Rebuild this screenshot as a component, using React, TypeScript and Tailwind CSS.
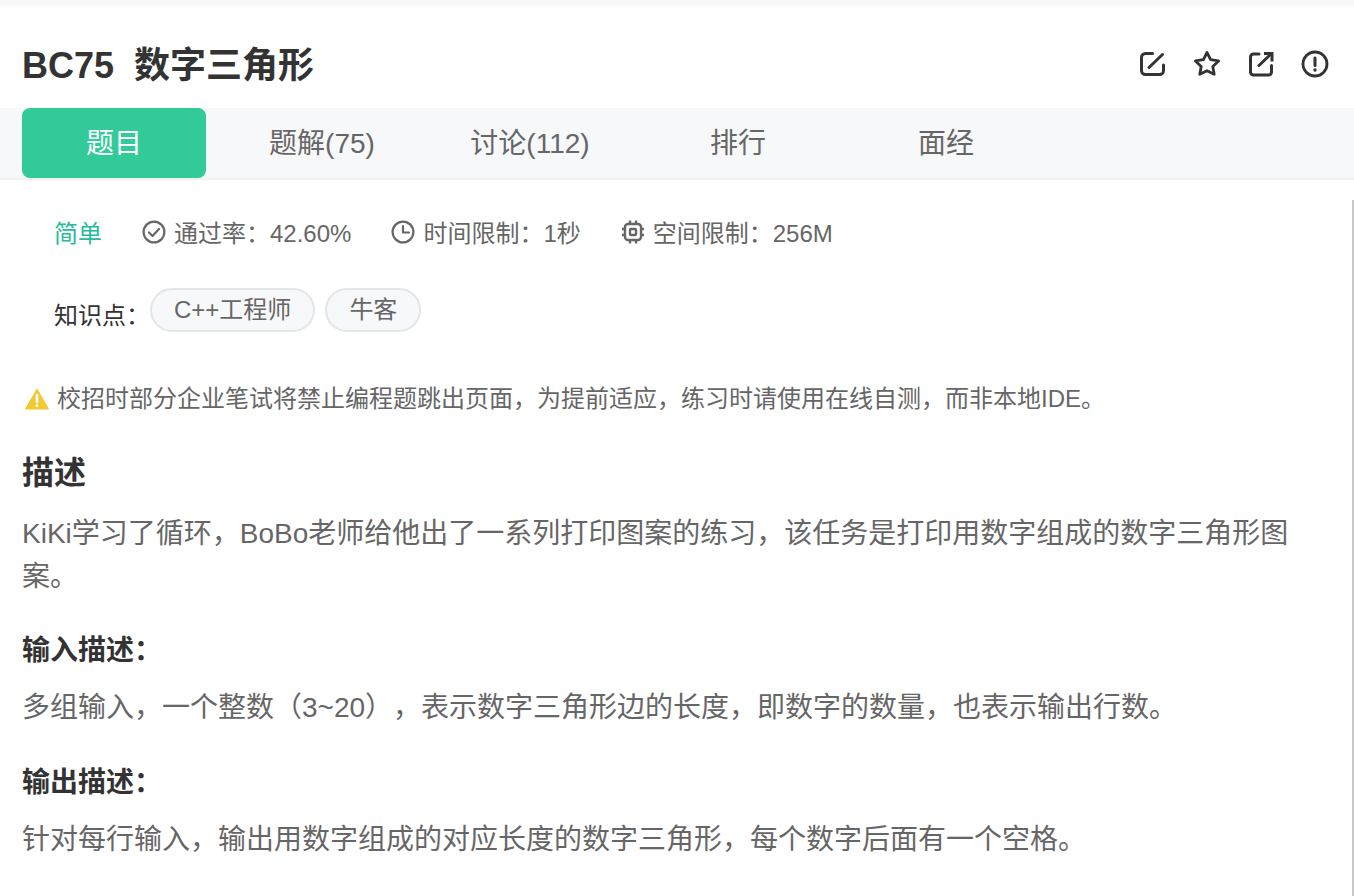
const FONT = "font-['Liberation_Sans','Noto_Sans_CJK_SC',sans-serif] [text-spacing-trim:space-all]";

const tabs = ["题目", "题解(75)", "讨论(112)", "排行", "面经"];

const IconEdit = () => (
  <svg width="28" height="28" viewBox="0 0 28 28" fill="none" stroke="#333" strokeWidth="3" strokeLinecap="round" strokeLinejoin="round">
    <path d="M13.500 3.500H6.500a4 4 0 0 0-4 4v13a4 4 0 0 0 4 4h14a4 4 0 0 0 4-4V15" />
    <path d="M10 17.500 23.500 4.500" />
  </svg>
);

const IconStar = () => (
  <svg width="28" height="28" viewBox="0 0 28 28" fill="none" stroke="#333" strokeWidth="2.800" strokeLinejoin="round">
    <path d="M14 2.500l3.600 7.200 8 1.200-5.800 5.500 1.400 7.900-7.200-3.600-7.200 3.600 1.400-7.900-5.800-5.500 8-1.200z" />
  </svg>
);

const IconShare = () => (
  <svg width="28" height="28" viewBox="0 0 28 28" fill="none" stroke="#333" strokeWidth="3" strokeLinecap="round" strokeLinejoin="round">
    <path d="M12 4H6.500a3 3 0 0 0-3 3v15a3 3 0 0 0 3 3h15a3 3 0 0 0 3-3v-6.500" />
    <path d="M12 15.500 24 4" />
    <path d="M17 3.500h8v8" strokeLinecap="butt" strokeLinejoin="miter" />
  </svg>
);

const IconAlert = () => (
  <svg width="28" height="28" viewBox="0 0 28 28" fill="none">
    <circle cx="14" cy="14" r="12" stroke="#333" strokeWidth="2.800" />
    <path d="M14 8v7.500" stroke="#333" strokeWidth="3" strokeLinecap="round" />
    <circle cx="14" cy="20" r="1.700" fill="#333" />
  </svg>
);

const IconCheck = () => (
  <svg className="-mt-[4px]" width="24" height="24" viewBox="0 0 24 24" fill="none" stroke="#666" strokeWidth="2.200" strokeLinecap="round" strokeLinejoin="round">
    <circle cx="12" cy="12" r="10.400" />
    <path d="M7 12.500l3.500 3.500 6.500-7" />
  </svg>
);

const IconClock = () => (
  <svg className="-mt-[4px]" width="24" height="24" viewBox="0 0 24 24" fill="none" stroke="#666" strokeWidth="2.200" strokeLinecap="round" strokeLinejoin="round">
    <circle cx="12" cy="12" r="10.400" />
    <path d="M12 6v6.500h6" />
  </svg>
);

const IconChip = () => (
  <svg className="-mt-[4px]" width="24" height="24" viewBox="0 0 24 24" fill="none" stroke="#666" strokeWidth="2.400">
    <rect x="4" y="4" width="16" height="16" rx="3" />
    <rect x="9" y="9" width="6" height="6" rx="1" />
    <path d="M9 .5V4M15 .5V4M9 20v3.500M15 20v3.500M1 9h3M1 15h3M20 9h3M20 15h3" />
  </svg>
);

const IconWarn = () => (
  <svg width="24" height="22" viewBox="0 0 24 22">
    <path d="M12 1 23.500 21H.5z" fill="#f4c92f" stroke="#f4c92f" strokeLinejoin="round" />
    <path d="M12 7v7" stroke="#fff" strokeWidth="2.600" strokeLinecap="round" />
    <circle cx="12" cy="17.500" r="1.500" fill="#fff" />
  </svg>
);

export default function App() {
  return (
    <div className={`${FONT} h-[896px] w-[1354px] overflow-hidden bg-white`}>
      <div className="h-[6px] bg-[#f7f8f9]" />

      <div className="flex h-[102px] items-center justify-between pl-[22px] pr-[25px] pt-[14px]">
        <h1 className="whitespace-pre pt-[4px] text-[36px] font-bold text-[#333]">BC75{"  "}数字三角形</h1>
        <div className="flex items-center gap-[26px]">
          <IconEdit />
          <IconStar />
          <IconShare />
          <IconAlert />
        </div>
      </div>

      <div className="flex h-[72px] gap-[24px] border-b-2 border-[#f0f1f3] bg-[#f7f8f9] pl-[22px]">
        {tabs.map((tab, i) => (
          <div
            key={tab}
            className={
              i === 0
                ? "flex h-[70px] w-[184px] items-center justify-center rounded-[8px] bg-[#32ca99] pt-[1px] text-[28px] text-white"
                : "flex h-[70px] w-[184px] items-center justify-center pt-[1px] text-[28px] text-[#666]"
            }
          >
            {tab}
          </div>
        ))}
      </div>

      <div className="flex h-[716px]">
        <div className="min-w-0 flex-1">
          <div className="flex items-center pl-[54px] pt-[36px] text-[24px] leading-[36px] text-[#666]">
            <span className="mr-[40px] text-[#25bb9b]">简单</span>
            <span className="mr-[40px] flex items-center gap-[8px]">
              <IconCheck />
              通过率：42.60%
            </span>
            <span className="mr-[40px] flex items-center gap-[8px]">
              <IconClock />
              时间限制：1秒
            </span>
            <span className="flex items-center gap-[8px]">
              <IconChip />
              空间限制：256M
            </span>
          </div>

          <div className="mt-[36px] flex items-start pl-[54px] text-[24px] text-[#333]">
            <span className="mt-[10px] leading-[36px]">知识点：</span>
            <span className="flex h-[44px] items-center rounded-full border-2 border-[#e4e5e8] bg-[#f7f8f9] px-[22px] text-[#666]">
              C++工程师
            </span>
            <span className="ml-[10px] flex h-[44px] items-center rounded-full border-2 border-[#e4e5e8] bg-[#f7f8f9] px-[22px] text-[#666]">
              牛客
            </span>
          </div>

          <div className="mt-[47px] flex items-center pl-[25px] text-[24px] leading-[36px] text-[#666]">
            <IconWarn />
            <span className="ml-[8px]">校招时部分企业笔试将禁止编程题跳出页面，为提前适应，练习时请使用在线自测，而非本地IDE。</span>
          </div>

          <div className="px-[22px]">
            <h2 className="mt-[36px] text-[32px] font-bold leading-[40px] text-[#333]">描述</h2>
            <p className="mt-[19px] text-[28px] leading-[43px] text-[#666]">
              KiKi学习了循环，BoBo老师给他出了一系列打印图案的练习，该任务是打印用数字组成的数字三角形图案。
            </p>
            <h3 className="mt-[33px] text-[28px] font-bold leading-[40px] text-[#333]">输入描述：</h3>
            <p className="mt-[15px] text-[28px] leading-[44px] text-[#666]">
              多组输入，一个整数（3~20），表示数字三角形边的长度，即数字的数量，也表示输出行数。
            </p>
            <h3 className="mt-[33px] text-[28px] font-bold leading-[40px] text-[#333]">输出描述：</h3>
            <p className="mt-[15px] text-[28px] leading-[44px] text-[#666]">
              针对每行输入，输出用数字组成的对应长度的数字三角形，每个数字后面有一个空格。
            </p>
          </div>
        </div>
        <div className="mt-[20px] w-[2px] bg-[#c8c8c8]" />
      </div>
    </div>
  );
}
